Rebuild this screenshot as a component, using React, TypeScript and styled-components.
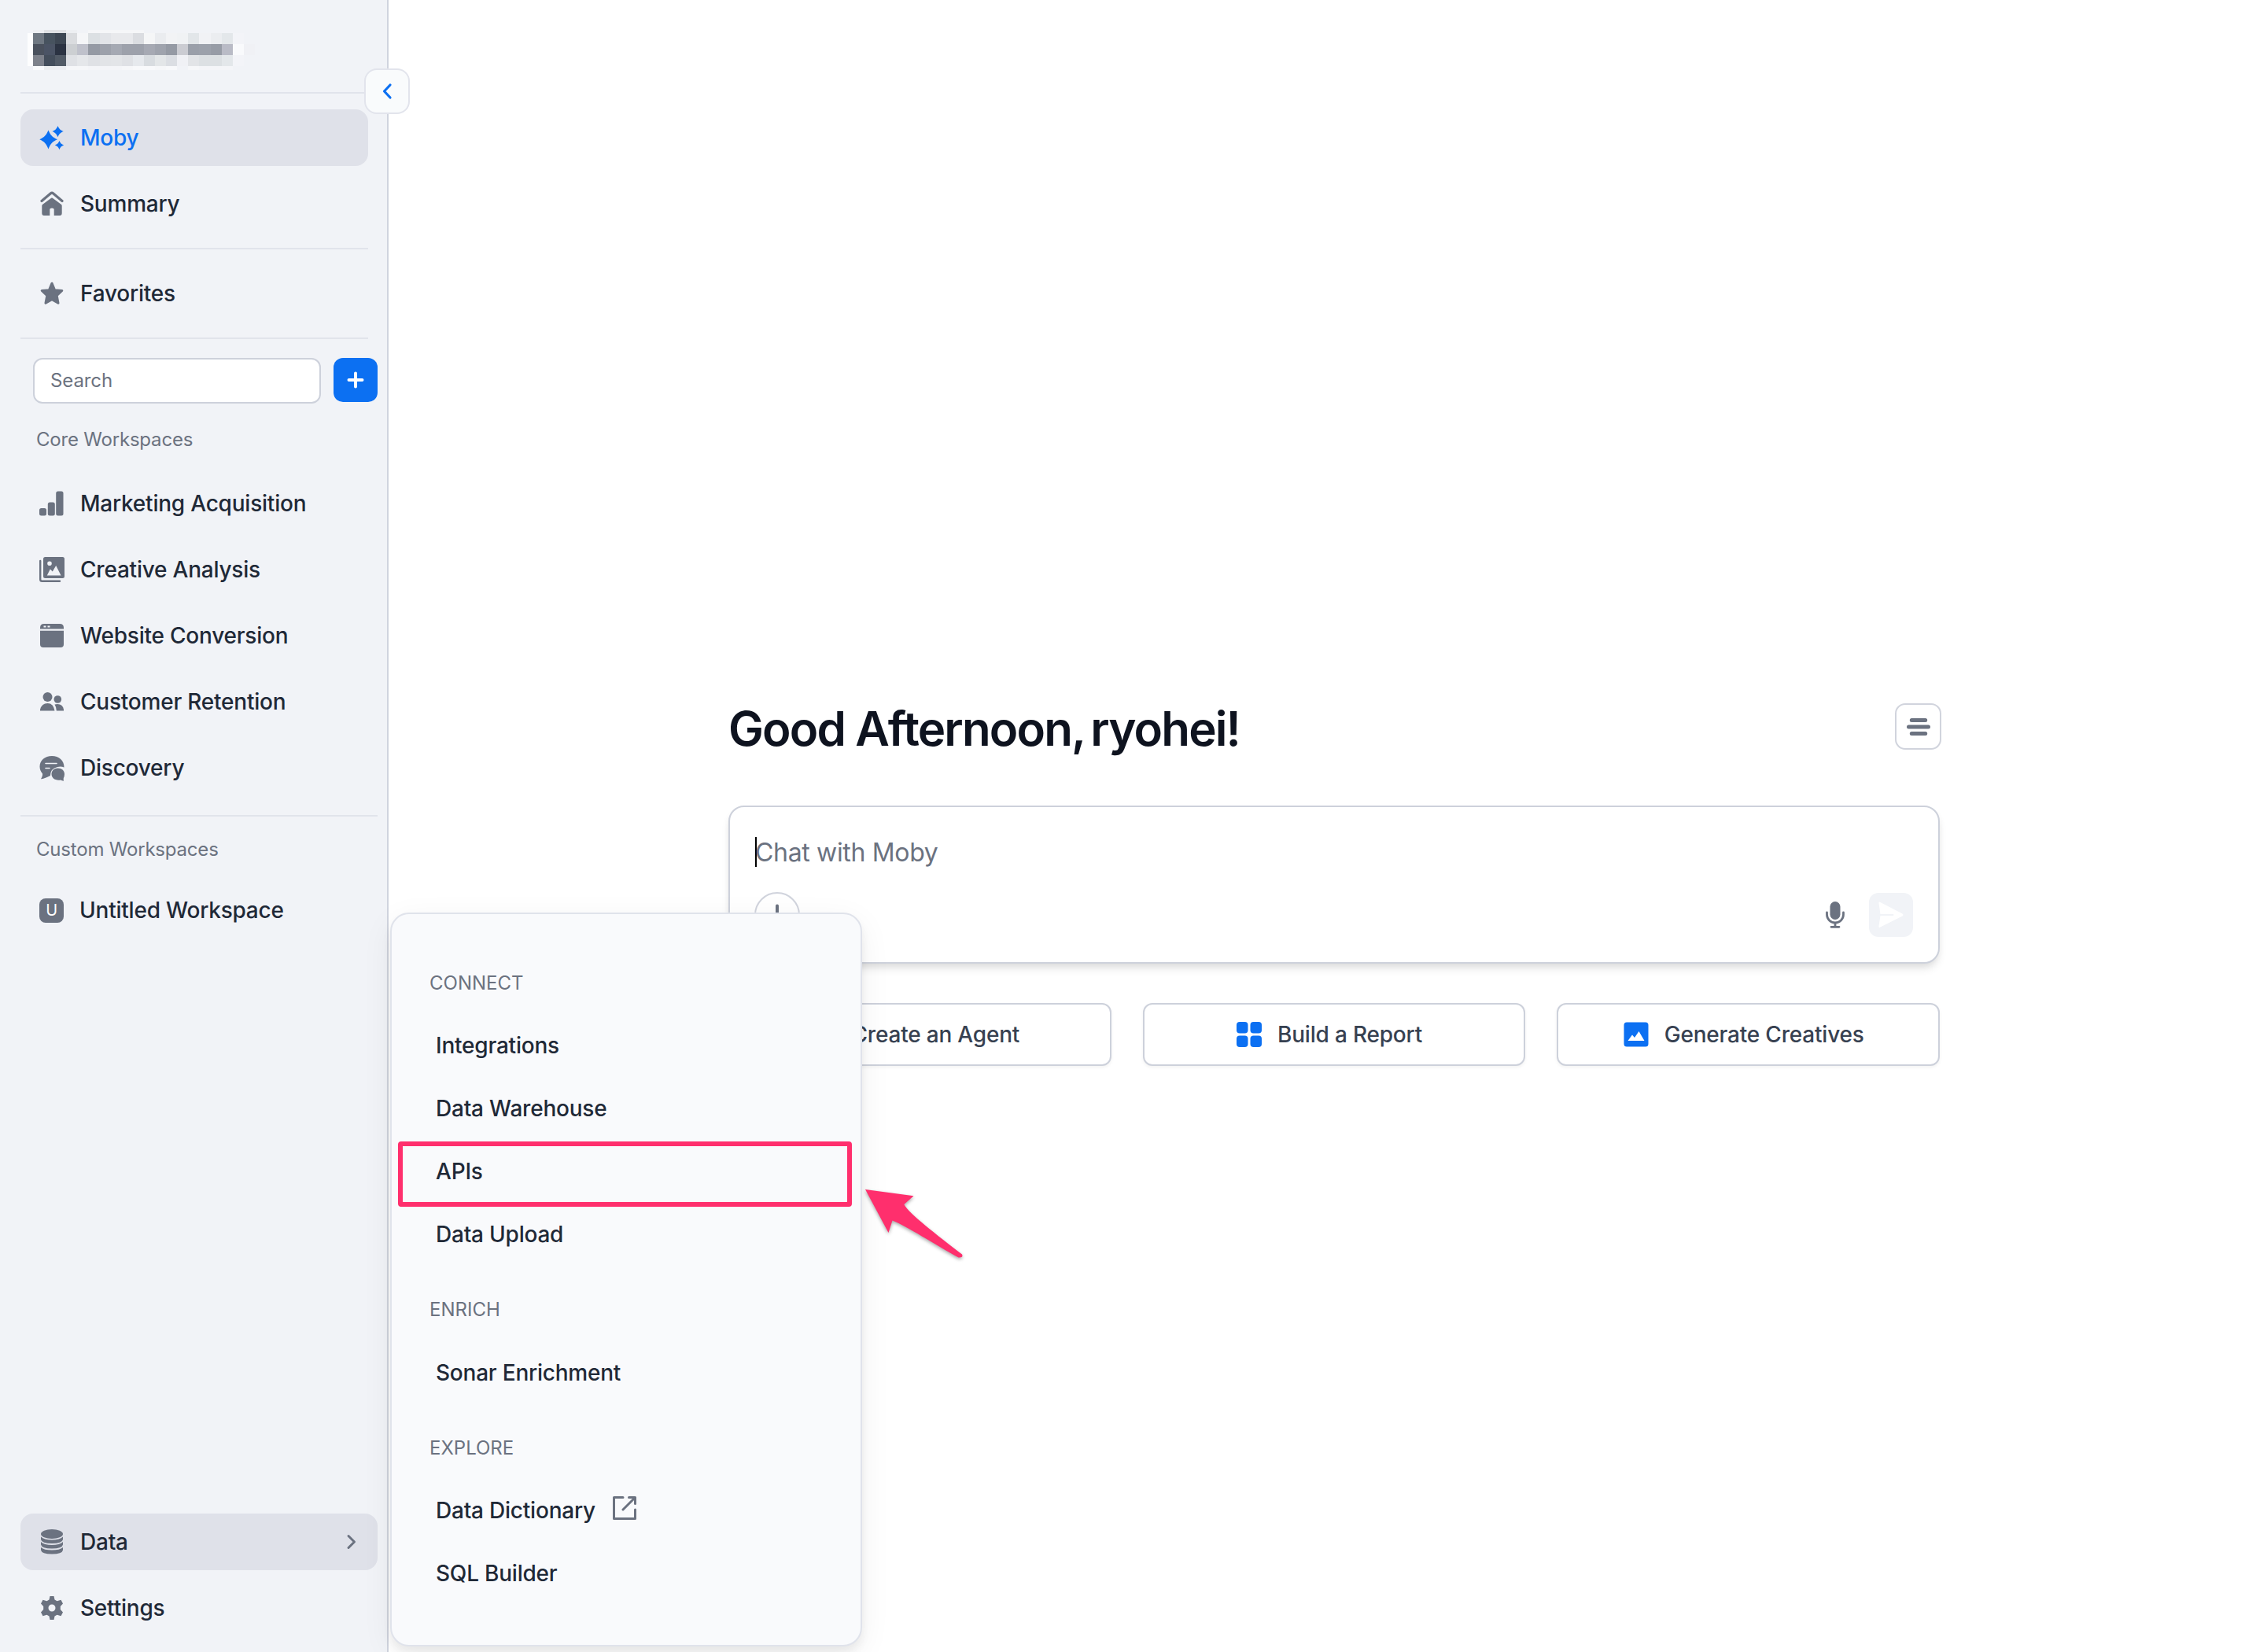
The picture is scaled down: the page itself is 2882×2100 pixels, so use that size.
import React from 'react';
import styled, { createGlobalStyle } from 'styled-components';

const GlobalStyle = createGlobalStyle`
  * { box-sizing: border-box; }
  body {
    margin: 0;
    background: #fff;
    font-family: Inter, 'Liberation Sans', sans-serif;
    color: #1f2937;
  }
  button { font-family: inherit; }
`;

const Page = styled.div`
  position: relative;
  display: flex;
  width: 2882px;
  height: 2100px;
  overflow: hidden;
`;

const Sidebar = styled.aside`
  position: relative;
  display: flex;
  flex-direction: column;
  width: 494px;
  height: 2100px;
  padding: 38px 0 20px 26px;
  background: #f1f3f7;
  border-right: 2px solid #d0d4de;
`;

const AccountMosaic = styled.div`
  display: grid;
  grid-template-columns: 7px repeat(20, 14.1px);
  grid-template-rows: 4px 14px 14px 14px 5px;
  margin: 0 0 28px 9px;
`;

const Cell = styled.span<{ $color: string }>`
  background: ${props => props.$color};
`;

const Divider = styled.hr<{ $wide?: boolean; $top?: number; $bottom?: number }>`
  width: ${props => props.$wide ? 454 : 442}px;
  height: 2px;
  margin: ${props => props.$top ?? 20}px 0 ${props => props.$bottom ?? 20}px;
  border: none;
  flex-shrink: 0;
  background: #e1e4eb;
`;

const NavList = styled.nav<{ $top?: number }>`
  display: flex;
  flex-direction: column;
  gap: 12px;
  margin-top: ${props => props.$top || 0}px;
`;

const NavItem = styled.a<{ $active?: boolean; $open?: boolean }>`
  display: flex;
  align-items: center;
  width: ${props => props.$open ? 454 : 442}px;
  height: 72px;
  padding: 0 26px 0 24px;
  border-radius: 16px;
  font-size: 28px;
  font-weight: 500;
  letter-spacing: -0.22px;
  color: ${props => props.$active ? '#0c70f2' : '#1f2937'};
  background: ${props => props.$active || props.$open ? '#dfe1e9' : 'transparent'};

  > svg:first-child {
    flex-shrink: 0;
    color: ${props => props.$active ? '#0c70f2' : '#6b7280'};
  }
`;

const NavLabel = styled.span`
  flex: 1;
  margin-left: 20px;
  white-space: nowrap;
`;

const SearchRow = styled.div`
  display: flex;
  gap: 16px;
  margin: 4px 0 0 16px;
`;

const SearchInput = styled.input`
  width: 366px;
  height: 58px;
  padding: 0 20px 1px;
  border: 2px solid #cdd1db;
  border-radius: 12px;
  background: #fff;
  font: 400 24px Inter, sans-serif;
  letter-spacing: -0.1px;

  &::placeholder {
    color: #6b7280;
    opacity: 1;
  }
`;

const AddButton = styled.button`
  display: flex;
  align-items: center;
  justify-content: center;
  width: 56px;
  height: 56px;
  padding: 0;
  border: none;
  border-radius: 12px;
  background: #0c70f2;
`;

const SectionLabel = styled.div<{ $top: number }>`
  margin: ${props => props.$top}px 0 0 20px;
  font-size: 24px;
  line-height: 32px;
  letter-spacing: -0.2px;
  color: #6b7280;
`;

const WorkspaceBadge = styled.span`
  display: flex;
  align-items: center;
  justify-content: center;
  width: 31px;
  height: 31px;
  border-radius: 8px;
  background: #6b7280;
  color: #fff;
  font-size: 20px;
  font-weight: 400;
`;

const SidebarFooter = styled.div`
  margin-top: auto;
`;

const CollapseButton = styled.button`
  position: absolute;
  top: 87px;
  left: 463px;
  display: flex;
  align-items: center;
  justify-content: center;
  width: 58px;
  height: 58px;
  padding: 0;
  border: 2px solid #e2e4ec;
  border-radius: 16px;
  background: #f9fbfc;
`;

const Main = styled.main`
  flex: 1;
  padding: 894px 416px 0 432px;
`;

const TitleRow = styled.div`
  display: flex;
  justify-content: space-between;
  margin-right: -2px;
`;

const Title = styled.h1`
  margin: 0;
  font-size: 60px;
  line-height: 64px;
  font-weight: 600;
  letter-spacing: -1.85px;
  color: #0e131f;
  white-space: nowrap;
`;

const UserName = styled.span`
  margin-left: -5px;
`;

const MenuButton = styled.button`
  display: flex;
  align-items: center;
  justify-content: center;
  width: 59px;
  height: 59px;
  padding: 0;
  border: 2px solid #d1d4dd;
  border-radius: 13px;
  background: #fff;
`;

const ChatBox = styled.section`
  display: flex;
  flex-direction: column;
  justify-content: space-between;
  height: 201px;
  margin-top: 66px;
  padding: 36px 32px 31px;
  border: 2px solid #cdd1db;
  border-radius: 20px;
  background: #fff;
  box-shadow: 0 8px 12px -2px rgba(0, 0, 0, 0.1), 0 4px 8px -2px rgba(0, 0, 0, 0.06);
`;

const Prompt = styled.div`
  display: flex;
  align-items: center;
  height: 42px;
  font-size: 32px;
  letter-spacing: -0.33px;
  color: #6b7280;
`;

const Caret = styled.span`
  width: 2px;
  height: 38px;
  margin-right: -2px;
  background: #000;
`;

const ChatTools = styled.div`
  display: flex;
  align-items: center;
  height: 58px;
`;

const AttachButton = styled.button`
  display: flex;
  align-items: center;
  justify-content: center;
  width: 58px;
  height: 58px;
  margin: 0 auto 0 -1px;
  padding: 0;
  border: 2px solid #d1d4dd;
  border-radius: 50%;
  background: #fff;
`;

const SendButton = styled.button`
  width: 56px;
  height: 56px;
  margin-left: 31px;
  padding: 0;
  border: none;
  border-radius: 12px;
  background: #f1f3f7;
`;

const Actions = styled.div`
  display: grid;
  grid-template-columns: repeat(3, 1fr);
  gap: 40px;
  margin-top: 50px;
`;

const ActionButton = styled.button`
  display: flex;
  align-items: center;
  justify-content: center;
  gap: 20px;
  height: 80px;
  padding: 0 12px 0 0;
  border: 2px solid #cdd1db;
  border-radius: 12px;
  background: #fff;
  box-shadow: 0 2px 4px rgba(0, 0, 0, 0.05);
  font-size: 28px;
  font-weight: 500;
  letter-spacing: -0.2px;
  color: #374151;
`;

const Flyout = styled.div`
  position: absolute;
  top: 1160px;
  left: 496px;
  width: 600px;
  height: 933px;
  padding: 32px 11px 0 8px;
  border: 2px solid #e0e3eb;
  border-radius: 24px;
  background: #f9fafc;
  box-shadow: 0 10px 40px rgba(0, 0, 0, 0.06), 0 8px 12px rgba(0, 0, 0, 0.06);
`;

const FlyoutHeading = styled.div`
  height: 95.4px;
  padding: 40px 0 0 40px;
  font-size: 24px;
  line-height: 32px;
  color: #6b7280;
`;

const FlyoutItem = styled.a`
  position: relative;
  display: flex;
  align-items: center;
  height: 80px;
  padding-left: 48px;
  font-size: 28px;
  font-weight: 500;
  letter-spacing: -0.22px;

  svg {
    margin: -7px 0 0 22px;
  }
`;

const Highlight = styled.span`
  position: absolute;
  inset: 2px 0 -5px;
  border: 6px solid #ff2f6d;
  border-radius: 4px;
`;

const PointerArrow = styled.svg`
  position: absolute;
  top: 1500px;
  left: 1090px;
  filter: drop-shadow(0 2px 2px rgba(0, 0, 0, 0.35));
`;

const mosaic = [
  ['', '#edeff2', '#dfe1e4', '#dfe1e4', '#edeff2', '', '#f5f6f8', '#f5f6f8', '#f5f6f8', '#f5f6f8', '#f5f6f8', '', '', '', '', '', '', '', '', '', ''],
  ['#fdfdfe', '#6f7882', '#47535f', '#3d4753', '#dadcdf', '#f5f6f8', '#dce0e3', '#e2e4e8', '#e8e9ec', '#e8e9ec', '#dbdde1', '#f5f6f7', '#eaecef', '#f2f3f5', '#f0f2f4', '#e2e6e9', '#f1f2f5', '#ebedf0', '#e3e7ea', '#f3f4f8', ''],
  ['#fdfdfe', '#4a515d', '#4b5465', '#2b3342', '#cccfd2', '#bfc1cb', '#959aa4', '#9da1ab', '#a5a9b3', '#9da1ab', '#9da1ab', '#a6a9b3', '#9fa3ad', '#959aa4', '#cbccd2', '#9a9fa9', '#9ca1ab', '#979ca6', '#b9bbc6', '#f9fafc', '#f0f1f5'],
  ['#fdfdfe', '#7e828b', '#444e5b', '#525b66', '#dfe1e5', '#e5e7ea', '#dfe1e5', '#e2e4e7', '#e3e5e8', '#dfe1e5', '#e6e9ed', '#d8dce0', '#e3e6e8', '#dbdee3', '#f0f1f5', '#e2e4e7', '#dce0e3', '#dce0e3', '#e3e7ea', '#f3f4f8', ''],
  ['', '#fafbfc', '#edeff0', '#edeff2', '#f6f7f9', '#f6f7f9', '#f4f5f8', '#f4f5f8', '#f4f5f8', '#f6f7f9', '#f8f9fb', '#f8f9fb', '#f6f7f9', '#f8f9fb', '', '#f6f7f9', '#f4f5f8', '#f4f5f8', '#f4f5f8', '', ''],
];

const icons: Record<string, React.ReactNode> = {
  moby: (
    <>
      <path d="M11.500 6.500C14 12.500 16.500 15.500 23 18.300C16.500 21 14 24 11.500 30.500C9 24 6.500 21 .300 18.300C6.500 15.500 9 12.500 11.500 6.500Z" />
      <path d="M23.500 1C25.200 5 26.800 6.500 30.800 8C26.800 9.600 25.200 11.200 23.500 15.300C21.800 11.200 20.200 9.600 16.400 8C20.200 6.500 21.800 5 23.500 1Z" />
      <path d="M25.500 20C26.900 23.200 28 24.300 31.200 25.600C28 26.900 26.900 28 25.500 31.300C24.100 28 23 26.900 19.800 25.600C23 24.300 24.100 23.200 25.500 20Z" />
    </>
  ),
  summary: (
    <>
      <path d="M3 12.500 14.200 3Q16 1.500 17.800 3L29 12.500" fill="none" stroke="currentColor" strokeWidth="3.200" strokeLinecap="round" />
      <path d="M14.500 9.200Q16 8 17.500 9.200L28 17Q28.700 17.600 28.700 18.500V28Q28.700 31 26 31H18.700V23Q18.700 21.500 16 21.500T13.300 23V31H6Q3.300 31 3.300 28V18.500Q3.300 17.600 4 17Z" />
    </>
  ),
  star: (
    <path d="M16 3.200 19.600 11.800 28.800 12.500 22.200 18.700 24 28.200 16 23.700 8 28.200 9.800 18.700 3.200 12.500 12.400 11.800Z" stroke="currentColor" strokeWidth="3" strokeLinejoin="round" />
  ),
  bars: (
    <>
      <rect x="0" y="22" width="9" height="9.500" rx="2.500" />
      <rect x="10.800" y="14.500" width="9" height="17" rx="2.500" />
      <rect x="21.200" y="0.500" width="9.300" height="31" rx="2.500" />
    </>
  ),
  gallery: (
    <>
      <path fillRule="evenodd" d="M7.500 0H29.500Q32 0 32 2.500V24.500Q32 27 29.500 27H7.500Q5 27 5 24.500V2.500Q5 0 7.500 0ZM13 5.500A2.800 2.800 0 1 0 13 11.100A2.800 2.800 0 1 0 13 5.500ZM9.800 23.500H27.500L21.200 11 16.800 18.500 13.800 15.500Z" />
      <path d="M1.200 5V28.500Q1.200 30.800 3.500 30.800H26" fill="none" stroke="currentColor" strokeWidth="2.400" strokeLinecap="round" />
    </>
  ),
  browser: (
    <>
      <path fillRule="evenodd" d="M6 1H26Q31 1 31 6V7.500H1V6Q1 1 6 1ZM5.500 3.500V5.500H8.500V3.500ZM10.500 3.500V5.500H13.500V3.500Z" />
      <path d="M1 9.800H31V27Q31 31 27 31H5Q1 31 1 27Z" />
    </>
  ),
  people: (
    <>
      <circle cx="10.500" cy="10" r="6" />
      <circle cx="23.300" cy="13" r="4.800" />
      <path d="M1 27.500V26Q3 18 10.500 18T19.500 27.500Z" />
      <path d="M19.500 19.500Q29.500 17.500 31 26V27.500H21.800Q21.500 22.500 19.500 19.500Z" />
    </>
  ),
  chat: (
    <>
      <path d="M16 1C25 1 31.500 6.500 31.500 15.500Q27.500 13.800 23 15Q14 17 14 26Q10.500 27.500 8.500 28.500Q4 30.500 2 30.200Q4.500 26 4 23.500Q.500 19.500 .500 14.500C.500 6.500 7 1 16 1Z" />
      <path d="M8 10.500H22M8 16.500H13" stroke="#f1f3f7" strokeWidth="1.600" strokeLinecap="round" />
      <path d="M23.500 16.500C28.500 16.500 32 19.500 32 24Q32 27 30.800 29Q30.500 31 31 32.800Q28.500 32.600 27 31.500C20 32.500 15.500 29 15.500 24C15.500 19.500 19 16.500 23.500 16.500Z" />
    </>
  ),
  database: (
    <>
      <ellipse cx="16" cy="6" rx="14" ry="6" />
      <path d="M2 9.500Q6 13.500 16 13.500T30 9.500V13Q29 18 16 18T2 13Z" />
      <path d="M2 16Q6 20 16 20T30 16V19.500Q29 24.500 16 24.500T2 19.500Z" />
      <path d="M2 23Q6 26.500 16 26.500T30 23V26.500Q29 31.500 16 31.500T2 26.500Z" />
    </>
  ),
  gear: (
    <path fillRule="evenodd" d="M13.500 1H18.500L19.500 5.500 22.500 7.200 27.500 5.800 30 10.500 26.800 14V18L30 21.500 27.500 26.200 22.500 24.800 19.500 26.500 18.500 31H13.500L12.500 26.500 9.500 24.800 4.500 26.200 2 21.500 5.200 18V14L2 10.500 4.500 5.800 9.500 7.200 12.500 5.500ZM16 11.500A4.500 4.500 0 1 0 16 20.500A4.500 4.500 0 1 0 16 11.500Z" />
  ),
  agent: <path d="M8 8H24V26H8ZM14 2H18V8H14Z" />,
  grid: (
    <>
      <rect x="0" y="0" width="14.500" height="14.500" rx="4" />
      <rect x="17.500" y="0" width="14.500" height="14.500" rx="4" />
      <rect x="0" y="17.500" width="14.500" height="14.500" rx="4" />
      <rect x="17.500" y="17.500" width="14.500" height="14.500" rx="4" />
    </>
  ),
  image: (
    <path fillRule="evenodd" d="M4 .500H28Q31.500 .500 31.500 4V28Q31.500 31.500 28 31.500H4Q.500 31.500 .500 28V4Q.500 .500 4 .500ZM5.500 24H26.500L19.500 12 14 20 11 16.500Z" />
  ),
};

const Icon = ({ name, color = 'currentColor' }: { name: string; color?: string }) => (
  <svg width="32" height="32" viewBox="0 0 32 32" fill={color} overflow="visible">
    {icons[name]}
  </svg>
);

const coreWorkspaces = [
  { icon: 'bars', label: 'Marketing Acquisition' },
  { icon: 'gallery', label: 'Creative Analysis' },
  { icon: 'browser', label: 'Website Conversion' },
  { icon: 'people', label: 'Customer Retention' },
  { icon: 'chat', label: 'Discovery' },
];

const flyoutGroups = [
  { heading: 'CONNECT', items: ['Integrations', 'Data Warehouse', 'APIs', 'Data Upload'] },
  { heading: 'ENRICH', items: ['Sonar Enrichment'] },
  { heading: 'EXPLORE', items: ['Data Dictionary', 'SQL Builder'] },
];

const App = () => {
  return (
    <Page>
      <GlobalStyle />
      <Sidebar>
        <AccountMosaic>
          {mosaic.flat().map((color, i) => (
            <Cell key={i} $color={color || 'transparent'} />
          ))}
        </AccountMosaic>
        <Divider $top={0} $bottom={0} />
        <NavList $top={20}>
          <NavItem $active>
            <Icon name="moby" />
            <NavLabel>Moby</NavLabel>
          </NavItem>
          <NavItem>
            <Icon name="summary" />
            <NavLabel>Summary</NavLabel>
          </NavItem>
        </NavList>
        <Divider />
        <NavItem>
          <Icon name="star" />
          <NavLabel>Favorites</NavLabel>
        </NavItem>
        <Divider />

        <SearchRow>
          <SearchInput placeholder="Search" />
          <AddButton>
            <svg width="22" height="22" viewBox="0 0 22 22" stroke="#fff" strokeWidth="4" strokeLinecap="round">
              <path d="M11 2.500V19.500M2.500 11H19.500" />
            </svg>
          </AddButton>
        </SearchRow>

        <SectionLabel $top={30}>Core Workspaces</SectionLabel>
        <NavList $top={29}>
          {coreWorkspaces.map(item => (
            <NavItem key={item.label}>
              <Icon name={item.icon} />
              <NavLabel>{item.label}</NavLabel>
            </NavItem>
          ))}
        </NavList>
        <Divider $wide $top={24} />
        <SectionLabel $top={6}>Custom Workspaces</SectionLabel>
        <NavList $top={25}>
          <NavItem>
            <WorkspaceBadge>U</WorkspaceBadge>
            <NavLabel>Untitled Workspace</NavLabel>
          </NavItem>
        </NavList>

        <SidebarFooter>
          <NavList>
            <NavItem $open>
              <Icon name="database" />
              <NavLabel>Data</NavLabel>
              <svg width="14" height="22" viewBox="0 0 14 22" fill="none" stroke="#6b7280" strokeWidth="3" strokeLinecap="round" strokeLinejoin="round">
                <path d="M3 3.500 10.500 11 3 18.500" />
              </svg>
            </NavItem>
            <NavItem>
              <Icon name="gear" />
              <NavLabel>Settings</NavLabel>
            </NavItem>
          </NavList>
        </SidebarFooter>

        <CollapseButton>
          <svg width="14" height="22" viewBox="0 0 14 22" fill="none" stroke="#0c70f2" strokeWidth="3.200" strokeLinecap="round" strokeLinejoin="round">
            <path d="M11 3 3.500 11 11 19" />
          </svg>
        </CollapseButton>
      </Sidebar>

      <Main>
        <TitleRow>
          <Title>Good Afternoon, <UserName>ryohei!</UserName></Title>
          <MenuButton>
            <svg width="30" height="24" viewBox="0 0 30 24" stroke="#6b7280" strokeWidth="5" strokeLinecap="round">
              <path d="M6.300 3.500H23.700M2.500 12H27.500M6.300 20.500H23.700" />
            </svg>
          </MenuButton>
        </TitleRow>

        <ChatBox>
          <Prompt>
            <Caret />
            Chat with Moby
          </Prompt>
          <ChatTools>
            <AttachButton>
              <svg width="28" height="28" viewBox="0 0 28 28" stroke="#6b7280" strokeWidth="4" strokeLinecap="round">
                <path d="M14 2.500V25.500M2.500 14H25.500" />
              </svg>
            </AttachButton>
            <svg width="24" height="34" viewBox="0 0 24 34" fill="#6b7280">
              <rect x="5.500" y="0" width="13" height="23" rx="6.500" />
              <path d="M1.500 14V16.500A10.500 10.500 0 0 0 22.500 16.500V14M12 27V32M7 32.300H17" fill="none" stroke="#6b7280" strokeWidth="2.800" strokeLinecap="round" />
            </svg>
            <SendButton>
              <svg width="56" height="56" viewBox="0 0 56 56" fill="#fff">
                <path d="M14.500 12Q12 10.500 12.500 13.500L14.500 27H31Q32 28 31 29H14.500L12.500 42Q12 45 14.500 43.500L42.500 29.500Q44.500 28 42.500 26.500Z" />
              </svg>
            </SendButton>
          </ChatTools>
        </ChatBox>

        <Actions>
          <ActionButton>
            <Icon name="agent" color="#0c70f2" />
            Create an Agent
          </ActionButton>
          <ActionButton>
            <Icon name="grid" color="#0c70f2" />
            Build a Report
          </ActionButton>
          <ActionButton>
            <Icon name="image" color="#0c70f2" />
            Generate Creatives
          </ActionButton>
        </Actions>
      </Main>

      <Flyout>
        {flyoutGroups.map(group => (
          <div key={group.heading}>
            <FlyoutHeading>{group.heading}</FlyoutHeading>
            {group.items.map(item => (
              <FlyoutItem key={item}>
                {item}
                {item === 'APIs' && <Highlight />}
                {item === 'Data Dictionary' && (
                  <svg width="30" height="30" viewBox="0 0 30 30" fill="none" stroke="#6b7280" strokeWidth="3" strokeLinecap="round" strokeLinejoin="round">
                    <path d="M13 1.500H1.500V28.500H28.500V17M20.500 1.500H28.500V9.500M28 2 13 17" />
                  </svg>
                )}
              </FlyoutItem>
            ))}
          </div>
        ))}
      </Flyout>

      <PointerArrow width="150" height="120" viewBox="0 0 150 120">
        <path d="M10 12 71.500 20.300 59.300 31C66 43 100 69 133 94.500Q135 99 128.500 98.500C100 83 62 58 44.500 51.500L39.500 67Z" fill="#ff2f6d" />
      </PointerArrow>
    </Page>
  );
};

export default App;
